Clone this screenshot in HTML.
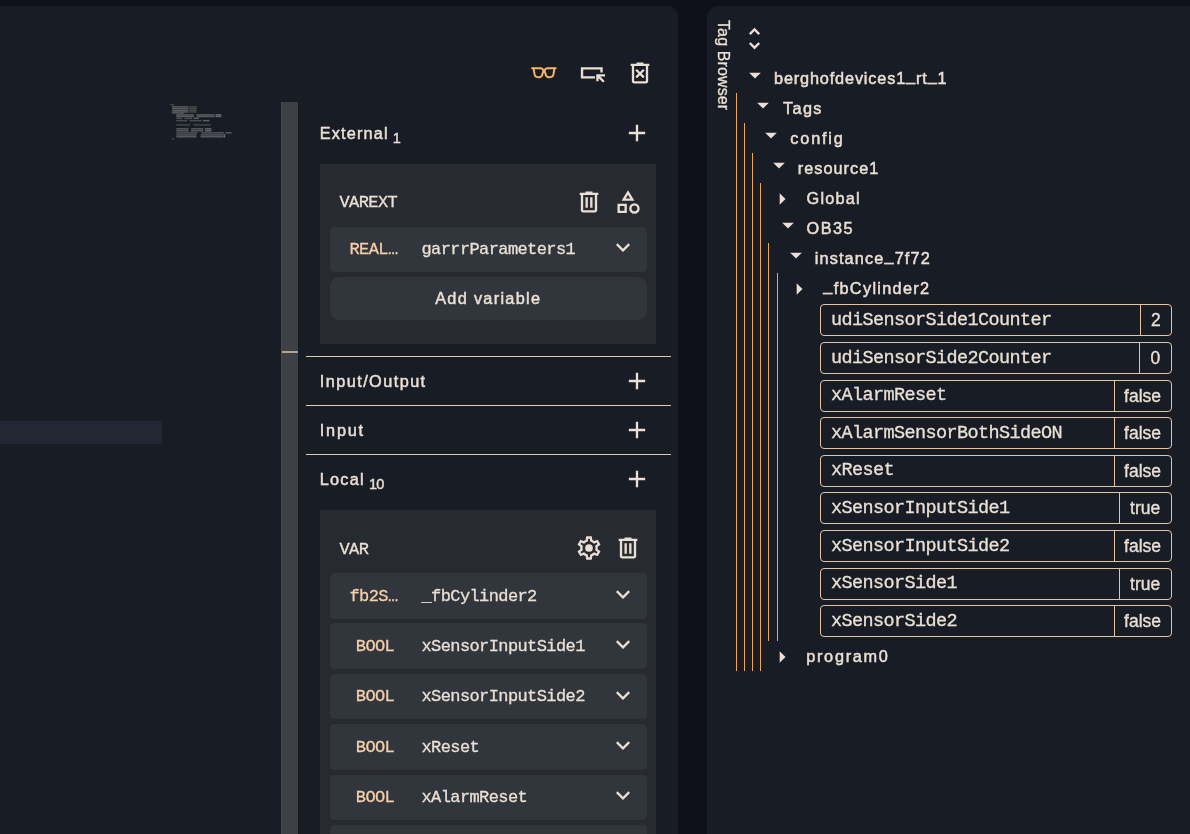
<!DOCTYPE html>
<html>
<head>
<meta charset="utf-8">
<style>
*{box-sizing:border-box;margin:0;padding:0}
html,body{width:1190px;height:834px;overflow:hidden;background:#0e111a;font-family:"Liberation Sans",sans-serif;color:#eadfd4}
.abs{position:absolute}
#left{position:absolute;left:0;top:6px;width:678px;height:828px;background:#181d25;border-top-right-radius:11px;overflow:hidden}
#right{position:absolute;left:707px;top:6px;width:483px;height:828px;background:#181d25;border-top-left-radius:11px;overflow:hidden}
#left .pg{position:absolute;left:0;top:-6px;width:678px;height:834px;will-change:transform}
#right .pg{position:absolute;left:-707px;top:-6px;width:1190px;height:834px;will-change:transform}
svg{position:absolute;display:block;overflow:visible}
.hl{left:0;top:421px;width:162px;height:23px;background:#232733}
.sb{left:281px;top:102px;width:18px;height:732px;background:#3d4045;border-left:1px solid #484b50;border-right:1px solid #14171e}
.sbm{left:282px;top:351px;width:16px;height:2px;background:#b3a494}
.sec{position:absolute;left:319.800px;font-size:16.300px;line-height:22px;white-space:nowrap;color:#eadfd4;-webkit-text-stroke:0.48px #eadfd4}
.sec sub{font-size:14.500px;letter-spacing:-0.8px;vertical-align:baseline;position:relative;top:4px;margin-left:4px;-webkit-text-stroke:0.4px #eadfd4}
.sep{position:absolute;left:306px;width:365px;height:1px;background:#e6c9ad}
.box{position:absolute;left:320px;width:336px;background:#272a30}
.blabel{position:absolute;left:339.5px;font-family:"Liberation Mono",monospace;font-size:17px;letter-spacing:-0.6px;line-height:20px;color:#eadfd4;white-space:nowrap;-webkit-text-stroke:0.3px #eadfd4}
.row{position:absolute;left:330px;width:316.500px;height:45.500px;background:#31353c;border-radius:4.5px}
.row .t{position:absolute;left:19.500px;top:13.600px;width:48px;text-align:center;font-family:"Liberation Mono",monospace;font-size:17px;letter-spacing:-0.6px;line-height:20px;color:#f4d0aa;white-space:nowrap;-webkit-text-stroke:0.3px #f4d0aa}
.row .n{position:absolute;left:91.500px;top:13.600px;font-family:"Liberation Mono",monospace;font-size:17px;letter-spacing:-0.6px;line-height:20px;color:#eadfd4;white-space:nowrap;-webkit-text-stroke:0.3px #eadfd4}
.btn{position:absolute;left:330px;width:316.500px;height:42.600px;background:#31353c;border-radius:9px;text-align:center;font-size:16.300px;letter-spacing:1.3px;line-height:43px;color:#eadfd4;-webkit-text-stroke:0.48px #eadfd4}
.tb{position:absolute;left:715px;top:20px;font-size:16px;line-height:16px;white-space:nowrap;transform-origin:0 0;transform:translate(16.400px,0) rotate(90deg);color:#eadfd4;letter-spacing:0.12px;-webkit-text-stroke:0.3px #eadfd4}
.ti{position:absolute;font-size:16.300px;line-height:22px;white-space:nowrap;color:#eadfd4;-webkit-text-stroke:0.48px #eadfd4}
.us{position:relative;top:-3px}
.vl{position:absolute;width:1px;background:#f3a653}
.tag{position:absolute;left:820px;width:351.600px;height:32px;border:1px solid #e2c4a6;border-radius:4px}
.tag .k{position:absolute;left:10px;top:4.500px;font-family:"Liberation Mono",monospace;font-size:18.500px;letter-spacing:-0.6px;line-height:22px;white-space:nowrap;color:#eadfd4;-webkit-text-stroke:0.3px #eadfd4}
.tag .v{position:absolute;right:0;top:0;height:30px;border-left:1px solid #e2c4a6;text-align:center;font-size:17.500px;line-height:31px;color:#eadfd4;-webkit-text-stroke:0.32px #eadfd4}
</style>
</head>
<body>

<div id="left"><div class="pg">
<div class="abs hl"></div><div class="abs sb"></div><div class="abs sbm"></div>
<svg style="left:0;top:0" width="300" height="160" viewBox="0 0 300 160"><rect x="170.2" y="104.15" width="4.0" height="1.4" fill="#4f8a45" fill-opacity="0.50"/><rect x="172.1" y="106.15" width="16.4" height="1.4" fill="#a8a8a8" fill-opacity="0.46"/><rect x="189.2" y="106.15" width="7.5" height="1.4" fill="#8fa58c" fill-opacity="0.37"/><rect x="172.1" y="107.85" width="16.4" height="1.4" fill="#a8a8a8" fill-opacity="0.46"/><rect x="189.2" y="107.85" width="7.5" height="1.4" fill="#8fa58c" fill-opacity="0.37"/><rect x="172.1" y="109.65" width="16.4" height="1.4" fill="#a8a8a8" fill-opacity="0.46"/><rect x="189.2" y="109.65" width="7.5" height="1.4" fill="#8fa58c" fill-opacity="0.37"/><rect x="172.1" y="111.25" width="16.4" height="1.4" fill="#a8a8a8" fill-opacity="0.46"/><rect x="189.2" y="111.25" width="7.5" height="1.4" fill="#8fa58c" fill-opacity="0.37"/><rect x="172.0" y="112.55" width="12.0" height="1.4" fill="#a8a8a8" fill-opacity="0.31"/><rect x="176.3" y="114.15" width="17.7" height="1.4" fill="#a8a8a8" fill-opacity="0.46"/><rect x="196.5" y="114.15" width="18.0" height="1.4" fill="#a8a8a8" fill-opacity="0.46"/><rect x="215.5" y="114.15" width="5.8" height="1.4" fill="#b8b8b8" fill-opacity="0.50"/><rect x="176.3" y="115.75" width="17.7" height="1.4" fill="#a8a8a8" fill-opacity="0.46"/><rect x="196.5" y="115.75" width="18.0" height="1.4" fill="#a8a8a8" fill-opacity="0.46"/><rect x="215.5" y="115.75" width="5.8" height="1.4" fill="#b8b8b8" fill-opacity="0.50"/><rect x="176.3" y="117.65" width="5.7" height="1.4" fill="#a8a8a8" fill-opacity="0.37"/><rect x="184.5" y="117.65" width="7.5" height="1.4" fill="#a8a8a8" fill-opacity="0.37"/><rect x="193.5" y="117.65" width="5.5" height="1.4" fill="#b8b8b8" fill-opacity="0.43"/><rect x="176.3" y="119.95" width="10.7" height="1.4" fill="#a8a8a8" fill-opacity="0.34"/><rect x="189.5" y="119.95" width="12.0" height="1.4" fill="#a8a8a8" fill-opacity="0.34"/><rect x="203.0" y="119.95" width="6.5" height="1.4" fill="#b8b8b8" fill-opacity="0.43"/><rect x="176.3" y="124.25" width="13.7" height="1.4" fill="#a8a8a8" fill-opacity="0.31"/><rect x="193.5" y="124.25" width="17.2" height="1.4" fill="#a8a8a8" fill-opacity="0.31"/><rect x="176.3" y="128.15" width="12.2" height="1.4" fill="#a8a8a8" fill-opacity="0.46"/><rect x="191.0" y="128.15" width="12.5" height="1.4" fill="#a8a8a8" fill-opacity="0.46"/><rect x="205.0" y="128.15" width="6.4" height="1.4" fill="#b8b8b8" fill-opacity="0.50"/><rect x="176.3" y="130.05" width="12.2" height="1.4" fill="#a8a8a8" fill-opacity="0.46"/><rect x="191.0" y="130.05" width="12.5" height="1.4" fill="#a8a8a8" fill-opacity="0.46"/><rect x="205.0" y="130.05" width="6.4" height="1.4" fill="#b8b8b8" fill-opacity="0.50"/><rect x="176.3" y="132.15" width="21.2" height="1.4" fill="#a8a8a8" fill-opacity="0.43"/><rect x="201.5" y="132.15" width="22.5" height="1.4" fill="#a8a8a8" fill-opacity="0.43"/><rect x="225.5" y="132.15" width="6.0" height="1.4" fill="#b8b8b8" fill-opacity="0.43"/><rect x="176.3" y="134.25" width="20.2" height="1.4" fill="#a8a8a8" fill-opacity="0.46"/><rect x="200.5" y="134.25" width="22.5" height="1.4" fill="#a8a8a8" fill-opacity="0.46"/><rect x="223.5" y="134.25" width="1.7" height="1.4" fill="#c8c8c8" fill-opacity="0.56"/><rect x="176.3" y="136.05" width="20.2" height="1.4" fill="#a8a8a8" fill-opacity="0.46"/><rect x="200.5" y="136.05" width="22.5" height="1.4" fill="#a8a8a8" fill-opacity="0.46"/><rect x="223.5" y="136.05" width="1.7" height="1.4" fill="#c8c8c8" fill-opacity="0.56"/><rect x="172.0" y="138.35" width="2.0" height="1.4" fill="#a8a8a8" fill-opacity="0.31"/></svg>
<svg style="left:530.10px;top:58.70px" width="28" height="28" viewBox="0 0 24 24" fill="#eadfd4"><g fill="none" stroke="#f6b466" stroke-width="1.700" stroke-linecap="round" stroke-linejoin="round"><path d="M1.800 8H9.200C10.600 8 11 9.300 12 9.300 13 9.300 13.400 8 14.800 8H22"/><path d="M3.100 8.200L3.900 13.200Q4.400 15.600 6.700 15.600H8.100Q9.900 15.600 10.400 13.800L11.700 9.500"/><path d="M20.900 8.200L20.100 13.200Q19.600 15.600 17.300 15.600H15.900Q14.100 15.600 13.600 13.800L12.300 9.500"/></g></svg>
<svg style="left:579.20px;top:58.70px" width="28" height="28" viewBox="0 0 24 24" fill="#eadfd4"><path d="M1.600 7.100H20.300V11.500H18.300V9.100H3.600V14.700H13.700V16.700H1.600z"/><path d="M14.800 13H22.300V15H18.200L22 18.800 20.600 20.200 16.800 16.400V19.100H14.800z"/></svg>
<svg style="left:625.70px;top:58.60px" width="28" height="28" viewBox="0 0 24 24" fill="#eadfd4"><path d="M9.4 16.5l2.6-2.6 2.6 2.6 1.4-1.4-2.6-2.6 2.6-2.6-1.4-1.4-2.6 2.6-2.6-2.6-1.4 1.4 2.6 2.6-2.6 2.6zM7 21q-.825 0-1.412-.587T5 19V6H4V4h5V3h6v1h5v2h-1v13q0 .825-.587 1.413T17 21zM17 6H7v13h10zM7 6v13z"/></svg>
<div class="sec" id="t-External" style="top:122.2px;letter-spacing:1.15px">External<sub>1</sub></div><svg style="left:623.20px;top:118.70px" width="28" height="28" viewBox="0 0 24 24" fill="#eadfd4"><path d="M11 13H5v-2h6V5h2v6h6v2h-6v6h-2z"/></svg>
<div class="box" style="top:164px;height:179.600px"></div>
<div class="blabel" style="top:192.500px">VAREXT</div>
<svg style="left:575.30px;top:187.50px" width="28" height="28" viewBox="0 0 24 24" fill="#eadfd4"><path d="M7 21q-.825 0-1.412-.587T5 19V6H4V4h5V3h6v1h5v2h-1v13q0 .825-.587 1.413T17 21zM17 6H7v13h10zM9 17h2V8H9zm4 0h2V8h-2zM7 6v13z"/></svg>
<svg style="left:614.00px;top:188.00px" width="28" height="28" viewBox="0 0 24 24" fill="#eadfd4"><path d="M6.5 11L12 2l5.5 9zm11 11q-1.875 0-3.187-1.312T13 17.5t1.313-3.187T17.5 13t3.188 1.313T22 17.500t-1.312 3.188T17.500 22zM3 21.500v-8h8v8zM17.500 20q1.050 0 1.775-.725T20 17.500t-.725-1.775T17.500 15t-1.775.725T15 17.500t.725 1.775T17.500 20zM5 19.500h4v-4H5zM10.050 9h3.900L12 5.850zM12 9z"/></svg>
<div class="row" style="top:227px;height:44.600px"><div class="t" style="top:12.6px">REAL…</div><div class="n" style="top:12.6px">garrrParameters1</div><svg style="left:278.80px;top:7.30px" width="28" height="28" viewBox="0 0 24 24" fill="#eadfd4"><path d="M12 15.4l-6-6L7.4 8l4.6 4.6L16.600 8 18 9.4z"/></svg></div>
<div class="btn" style="top:277px">Add variable</div>
<div class="sep" style="top:356px"></div>
<div class="sec" id="t-InputOutput" style="top:370.2px;letter-spacing:1.43px">Input/Output</div><svg style="left:623.20px;top:366.70px" width="28" height="28" viewBox="0 0 24 24" fill="#eadfd4"><path d="M11 13H5v-2h6V5h2v6h6v2h-6v6h-2z"/></svg>
<div class="sep" style="top:405px"></div>
<div class="sec" id="t-Input" style="top:419.2px;letter-spacing:1.75px">Input</div><svg style="left:623.20px;top:415.70px" width="28" height="28" viewBox="0 0 24 24" fill="#eadfd4"><path d="M11 13H5v-2h6V5h2v6h6v2h-6v6h-2z"/></svg>
<div class="sep" style="top:454px"></div>
<div class="sec" id="t-Local" style="top:468.2px;letter-spacing:1.23px">Local<sub>10</sub></div><svg style="left:623.20px;top:464.70px" width="28" height="28" viewBox="0 0 24 24" fill="#eadfd4"><path d="M11 13H5v-2h6V5h2v6h6v2h-6v6h-2z"/></svg>
<div class="box" style="top:510px;height:330px"></div>
<div class="blabel" style="top:539.800px">VAR</div>
<svg style="left:575.00px;top:533.50px" width="28" height="28" viewBox="0 0 24 24" fill="#eadfd4"><path d="M19.43 12.98c.04-.32.07-.64.07-.98 0-.34-.03-.66-.07-.98l2.110-1.650c.19-.15.24-.42.12-.64l-2-3.460c-.09-.16-.26-.25-.44-.25-.06 0-.12.01-.17.03l-2.490 1c-.52-.4-1.080-.73-1.690-.98l-.38-2.650C14.460 2.180 14.250 2 14 2h-4c-.25 0-.46.18-.49.42l-.38 2.650c-.61.25-1.170.59-1.690.98l-2.490-1c-.06-.02-.12-.03-.18-.03-.17 0-.34.09-.43.25l-2 3.460c-.13.22-.07.49.12.64l2.110 1.650c-.04.32-.07.65-.07.98 0 .33.03.66.07.98l-2.110 1.650c-.19.15-.24.42-.12.64l2 3.460c.09.16.26.25.44.25.06 0 .12-.01.17-.03l2.490-1c.52.4 1.080.73 1.690.98l.38 2.650c.03.24.24.42.49.42h4c.25 0 .46-.18.49-.42l.38-2.650c.61-.25 1.170-.59 1.690-.98l2.490 1c.06.02.12.03.18.03.17 0 .34-.09.43-.25l2-3.460c.12-.22.07-.49-.12-.64l-2.110-1.650zm-1.980-1.710c.04.31.05.52.05.73 0 .21-.02.43-.05.73l-.14 1.130.89.7 1.080.84-.7 1.210-1.270-.51-1.040-.42-.9.68c-.43.32-.84.56-1.250.73l-1.060.43-.16 1.130-.2 1.350h-1.400l-.19-1.350-.16-1.130-1.060-.43c-.43-.18-.83-.41-1.230-.71l-.91-.7-1.060.43-1.270.51-.7-1.210 1.080-.84.89-.7-.14-1.130c-.03-.31-.05-.54-.05-.74s.02-.43.05-.73l.14-1.130-.89-.7-1.080-.84.7-1.210 1.270.51 1.040.42.9-.68c.43-.32.84-.56 1.250-.73l1.060-.43.16-1.130.2-1.350h1.390l.19 1.350.16 1.130 1.060.43c.43.18.83.41 1.230.71l.91.7 1.060-.43 1.270-.51.7 1.210-1.070.85-.89.7.14 1.130zM12 8.700a3.300 3.300 0 100 6.600 3.300 3.300 0 000-6.600z"/></svg>
<svg style="left:613.50px;top:533.50px" width="28" height="28" viewBox="0 0 24 24" fill="#eadfd4"><path d="M7 21q-.825 0-1.412-.587T5 19V6H4V4h5V3h6v1h5v2h-1v13q0 .825-.587 1.413T17 21zM17 6H7v13h10zM9 17h2V8H9zm4 0h2V8h-2zM7 6v13z"/></svg>
<div class="row" style="top:573px"><div class="t">fb2S…</div><div class="n">_fbCylinder2</div><svg style="left:278.80px;top:7.90px" width="28" height="28" viewBox="0 0 24 24" fill="#eadfd4"><path d="M12 15.4l-6-6L7.4 8l4.6 4.6L16.600 8 18 9.4z"/></svg></div>
<div class="row" style="top:623.4px"><div class="t" style="left:21px;">BOOL</div><div class="n">xSensorInputSide1</div><svg style="left:278.80px;top:7.90px" width="28" height="28" viewBox="0 0 24 24" fill="#eadfd4"><path d="M12 15.4l-6-6L7.4 8l4.6 4.6L16.600 8 18 9.4z"/></svg></div>
<div class="row" style="top:673.8px"><div class="t" style="left:21px;">BOOL</div><div class="n">xSensorInputSide2</div><svg style="left:278.80px;top:7.90px" width="28" height="28" viewBox="0 0 24 24" fill="#eadfd4"><path d="M12 15.4l-6-6L7.4 8l4.6 4.6L16.600 8 18 9.4z"/></svg></div>
<div class="row" style="top:724.2px"><div class="t" style="left:21px;">BOOL</div><div class="n">xReset</div><svg style="left:278.80px;top:7.90px" width="28" height="28" viewBox="0 0 24 24" fill="#eadfd4"><path d="M12 15.4l-6-6L7.4 8l4.6 4.6L16.600 8 18 9.4z"/></svg></div>
<div class="row" style="top:774.6px"><div class="t" style="left:21px;">BOOL</div><div class="n">xAlarmReset</div><svg style="left:278.80px;top:7.90px" width="28" height="28" viewBox="0 0 24 24" fill="#eadfd4"><path d="M12 15.4l-6-6L7.4 8l4.6 4.6L16.600 8 18 9.4z"/></svg></div>
<div class="row" style="top:825px"></div>
</div></div>
<div id="right"><div class="pg">
<div class="tb">Tag Browser</div>
<svg style="left:740.00px;top:24.00px" width="29" height="29" viewBox="0 0 24 24" fill="#eadfd4"><path d="M12 21l-4.6-4.6L8.825 15 12 18.15 15.175 15l1.425 1.4zM8.825 9L7.400 7.600 12 3l4.600 4.600L15.175 9 12 5.850z"/></svg>
<svg style="left:741.00px;top:60.90px" width="28" height="28" viewBox="0 0 24 24" fill="#eadfd4"><path d="M12 15l-5-5h10z"/></svg>
<div class="ti" style="left:774px;top:66.8px;letter-spacing:0.84px">berghofdevices1<span class="us">_</span>rt<span class="us">_</span>1</div>
<svg style="left:748.80px;top:90.90px" width="28" height="28" viewBox="0 0 24 24" fill="#eadfd4"><path d="M12 15l-5-5h10z"/></svg>
<div class="ti" style="left:783px;top:96.8px;letter-spacing:1.37px">Tags</div>
<svg style="left:756.80px;top:120.90px" width="28" height="28" viewBox="0 0 24 24" fill="#eadfd4"><path d="M12 15l-5-5h10z"/></svg>
<div class="ti" style="left:790.3px;top:126.8px;letter-spacing:1.82px">config</div>
<svg style="left:764.80px;top:150.90px" width="28" height="28" viewBox="0 0 24 24" fill="#eadfd4"><path d="M12 15l-5-5h10z"/></svg>
<div class="ti" style="left:797.7px;top:156.8px;letter-spacing:1.03px">resource1</div>
<svg style="left:768.30px;top:184.60px" width="28" height="28" viewBox="0 0 24 24" fill="#eadfd4"><path d="M10 17V7l5 5z"/></svg>
<div class="ti" style="left:806.5px;top:186.8px;letter-spacing:1.22px">Global</div>
<svg style="left:774.00px;top:210.90px" width="28" height="28" viewBox="0 0 24 24" fill="#eadfd4"><path d="M12 15l-5-5h10z"/></svg>
<div class="ti" style="left:806.5px;top:216.8px;letter-spacing:1.5px">OB35</div>
<svg style="left:781.80px;top:240.90px" width="28" height="28" viewBox="0 0 24 24" fill="#eadfd4"><path d="M12 15l-5-5h10z"/></svg>
<div class="ti" style="left:814.7px;top:246.8px;letter-spacing:1.14px">instance<span class="us">_</span>7f72</div>
<svg style="left:785.30px;top:274.60px" width="28" height="28" viewBox="0 0 24 24" fill="#eadfd4"><path d="M10 17V7l5 5z"/></svg>
<div class="ti" style="left:823.3px;top:276.8px;letter-spacing:1.31px"><span class="us">_</span>fbCylinder2</div>
<svg style="left:768.30px;top:642.60px" width="28" height="28" viewBox="0 0 24 24" fill="#eadfd4"><path d="M10 17V7l5 5z"/></svg>
<div class="ti" style="left:806.2px;top:644.8px;letter-spacing:1.72px">program0</div>
<div class="vl" style="left:736px;top:93px;height:578px"></div>
<div class="vl" style="left:744px;top:123px;height:548px"></div>
<div class="vl" style="left:752px;top:153px;height:518px"></div>
<div class="vl" style="left:760px;top:183px;height:488px"></div>
<div class="vl" style="left:768px;top:243px;height:398px"></div>
<div class="vl" style="left:777px;top:273px;height:368px"></div>
<div class="tag" style="top:304.4px"><div class="k">udiSensorSide1Counter</div><div class="v" style="width:30.4px">2</div></div>
<div class="tag" style="top:342.0px"><div class="k">udiSensorSide2Counter</div><div class="v" style="width:31.6px">0</div></div>
<div class="tag" style="top:379.6px"><div class="k">xAlarmReset</div><div class="v" style="width:57px">false</div></div>
<div class="tag" style="top:417.2px"><div class="k">xAlarmSensorBothSideON</div><div class="v" style="width:57px">false</div></div>
<div class="tag" style="top:454.8px"><div class="k">xReset</div><div class="v" style="width:57px">false</div></div>
<div class="tag" style="top:492.4px"><div class="k">xSensorInputSide1</div><div class="v" style="width:52px">true</div></div>
<div class="tag" style="top:530.0px"><div class="k">xSensorInputSide2</div><div class="v" style="width:57px">false</div></div>
<div class="tag" style="top:567.6px"><div class="k">xSensorSide1</div><div class="v" style="width:52px">true</div></div>
<div class="tag" style="top:605.2px"><div class="k">xSensorSide2</div><div class="v" style="width:57px">false</div></div>
</div></div>
</body>
</html>
